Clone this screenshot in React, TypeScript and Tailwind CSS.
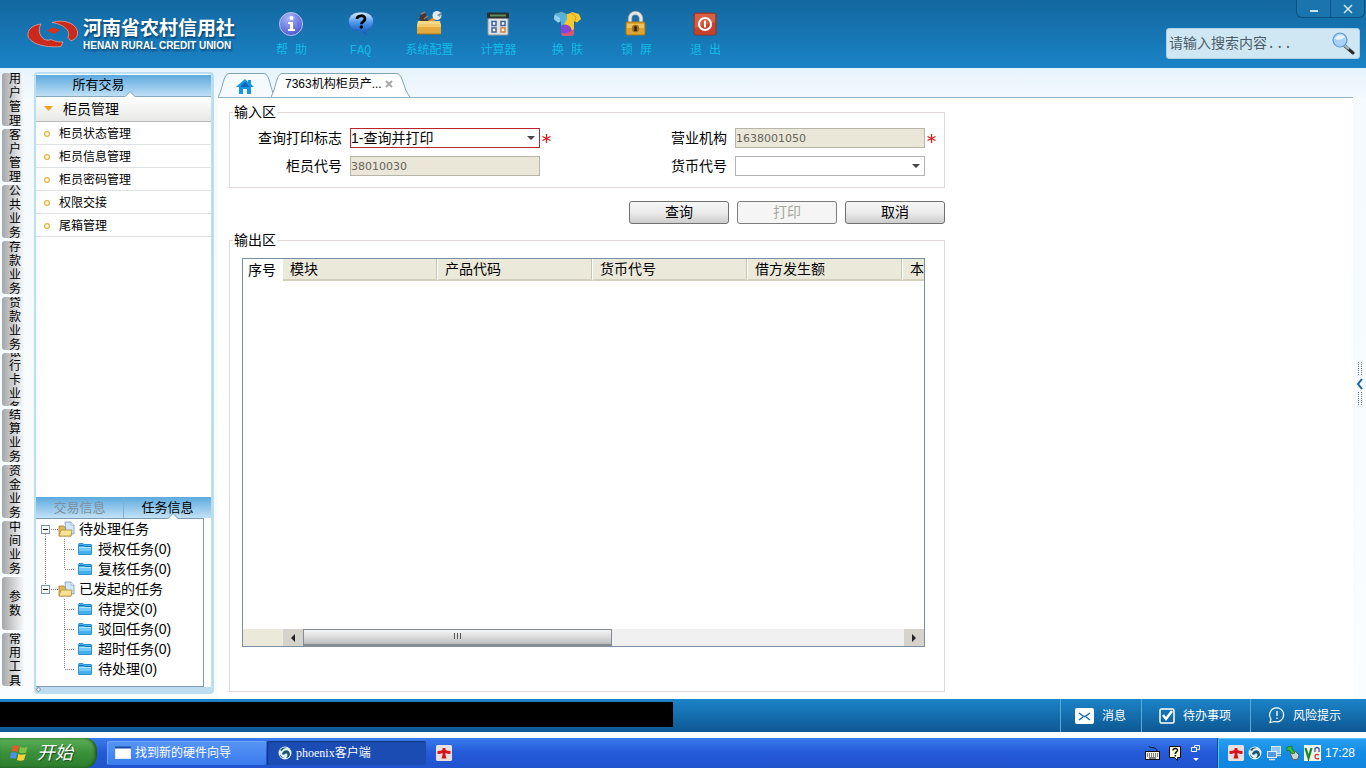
import React from "react";

const businessTabs = [
  "用户管理",
  "客户管理",
  "公共业务",
  "存款业务",
  "贷款业务",
  "银行卡业务",
  "结算业务",
  "资金业务",
  "中间业务",
  "参数",
  "常用工具",
];

const menuItems = ["柜员状态管理", "柜员信息管理", "柜员密码管理", "权限交接", "尾箱管理"];

const taskGroups = [
  { name: "待处理任务", items: ["授权任务(0)", "复核任务(0)"] },
  { name: "已发起的任务", items: ["待提交(0)", "驳回任务(0)", "超时任务(0)", "待处理(0)"] },
];

const columns = ["模块", "产品代码", "货币代号", "借方发生额", "本"];

function LogoMark() {
  return (
    <svg width="52" height="32" viewBox="0 0 52 32" aria-hidden="true">
      <path d="M14 5C5 6 0 11 1 17c2 7 15 12 33 10.500l2-4.500c-6 0-9-1-12-2.500-2 1-6 1-8-1-4-4-5-9-2-14.500z" fill="#cb2a1a" stroke="#e9b3ac" strokeWidth=".7" />
      <path d="M25 3.500c12-4 24 1 25.500 9 .5 5-2 7.500-6.500 9.500l-3-3.500c3-7-4-13-16-15z" fill="#cb2a1a" stroke="#e9b3ac" strokeWidth=".7" />
      <path d="M20 11.500l6-3 7 2.500-6 4z" fill="#dd2f1c" />
    </svg>
  );
}

function HelpIcon() {
  return (
    <svg width="28" height="28" viewBox="0 0 28 28" aria-hidden="true">
      <defs>
        <radialGradient id="help" cx=".4" cy=".25" r=".8">
          <stop offset="0" stopColor="#aab6fa" />
          <stop offset="1" stopColor="#4a55cf" />
        </radialGradient>
      </defs>
      <circle cx="13" cy="14" r="11.5" fill="url(#help)" stroke="#b9c4f2" />
      <circle cx="13.500" cy="8" r="2" fill="#fff" />
      <path d="M10 12h5v7h2v2h-7v-2h2v-5h-2z" fill="#fff" />
    </svg>
  );
}

function FaqIcon() {
  return (
    <svg width="28" height="28" viewBox="0 0 28 28" aria-hidden="true">
      <defs>
        <linearGradient id="faq" x1="0" y1="0" x2="0" y2="1">
          <stop offset="0" stopColor="#dff1ff" />
          <stop offset=".45" stopColor="#4795ea" />
          <stop offset="1" stopColor="#0c49b0" />
        </linearGradient>
      </defs>
      <path d="M14 2c8 0 12.500 4 12.500 9S23 20 18 21l2 5-6-5C6 21 1.500 17 1.500 11.500S6 2 14 2z" fill="url(#faq)" stroke="#2263b8" strokeWidth=".7" />
      <path d="M10 9c0-4 8-4.500 8-.3 0 3-3.500 2.800-3.500 5.500" fill="none" stroke="#05070c" strokeWidth="2.800" />
      <circle cx="14.300" cy="17" r="1.700" fill="#05070c" />
    </svg>
  );
}

function ConfigIcon() {
  return (
    <svg width="28" height="28" viewBox="0 0 28 28" aria-hidden="true">
      <path d="M3 9l3-7 4 2 2 7-5 1z" fill="#49372f" />
      <path d="M5 4l4-2M8 9l4-3" stroke="#9a7d70" strokeWidth="1.500" />
      <path d="M12 11l7-5 2 2-5 5z" fill="#e88a25" />
      <circle cx="21" cy="5.500" r="4.500" fill="#e3eaf0" />
      <path d="M21 5l5-3-2 5z" fill="#84919c" />
      <path d="M2 11h22l1 4H1z" fill="#f8da86" />
      <path d="M1 14h24v10H1z" fill="#e6ab3f" />
      <path d="M1 14h24v3H1z" fill="#f4cc6d" />
      <path d="M1 24h24" stroke="#a96f1d" />
    </svg>
  );
}

function CalculatorIcon() {
  return (
    <svg width="28" height="28" viewBox="0 0 28 28" aria-hidden="true">
      <rect x="3" y="7" width="20" height="18" rx="1" fill="#dfe3e4" stroke="#8f9a9f" />
      <rect x="2" y="2.500" width="22" height="6" rx="1" fill="#26312f" />
      <path d="M5 5.500h16" stroke="#638c56" strokeWidth="2" />
      <g fill="#fff" stroke="#41619f" strokeWidth="1.500">
        <rect x="7" y="11.500" width="4" height="4" />
        <rect x="16" y="11.500" width="4" height="4" />
        <rect x="7" y="18" width="4" height="4" />
        <rect x="16" y="18" width="4" height="4" stroke="#dc8130" />
      </g>
    </svg>
  );
}

function SkinIcon() {
  return (
    <svg width="28" height="28" viewBox="0 0 28 28" aria-hidden="true">
      <defs>
        <clipPath id="shirt">
          <path d="M8 2q5 4 10 0l7 2 2 5-4 3.500-3-1.500v12l-1.500 2.500h-10L7 23V11l-3 1.500L0 9l1-5z" />
        </clipPath>
      </defs>
      <g clipPath="url(#shirt)">
        <path d="M0 0h28v28H0z" fill="#f6c92c" />
        <path d="M0 0h13v9l-5 9H0z" fill="#56b2da" />
        <path d="M0 4l6 4v6H0z" fill="#91d1ea" />
        <path d="M5 17c4-4 10-3 12 1l3 8H5z" fill="#8547cf" />
        <path d="M7 23c5 1 9 0 14-5v9H7z" fill="#e0526e" />
        <path d="M17 3l5 4-2 9" fill="none" stroke="#e69a1d" />
      </g>
    </svg>
  );
}

function LockIcon() {
  return (
    <svg width="28" height="28" viewBox="0 0 28 28" aria-hidden="true">
      <path d="M7 14V8.500a5.500 5.500 0 0 1 11 0V14" fill="none" stroke="#7e8b90" strokeWidth="4.500" />
      <path d="M7 14V8.500a5.500 5.500 0 0 1 11 0V14" fill="none" stroke="#e3e7e8" strokeWidth="3" />
      <rect x="3" y="12" width="19" height="13" rx="1.500" fill="#dda530" stroke="#a3761d" />
      <path d="M4 14h17v4H4z" fill="#f2cf70" opacity=".7" />
      <circle cx="12.500" cy="18.500" r="3.700" fill="#9a6c1c" />
      <path d="M12.500 16a1.500 1.500 0 0 1 1 2.500l.5 2.500h-3l.5-2.500a1.500 1.500 0 0 1 1-2.500z" fill="#2e2110" />
    </svg>
  );
}

function ExitIcon() {
  return (
    <svg width="28" height="28" viewBox="0 0 28 28" aria-hidden="true">
      <rect x="2" y="3" width="22" height="22" rx="2" fill="#c4432b" stroke="#943425" />
      <path d="M3 4h20v8L3 18z" fill="#d9694f" opacity=".75" />
      <circle cx="13" cy="14" r="6" fill="none" stroke="#fff" strokeWidth="2" />
      <path d="M13 10.500v7" stroke="#fff" strokeWidth="2" />
    </svg>
  );
}

const tools = [
  { label: "帮 助", icon: <HelpIcon /> },
  { label: "FAQ", icon: <FaqIcon /> },
  { label: "系统配置", icon: <ConfigIcon /> },
  { label: "计算器", icon: <CalculatorIcon /> },
  { label: "换 肤", icon: <SkinIcon /> },
  { label: "锁 屏", icon: <LockIcon /> },
  { label: "退 出", icon: <ExitIcon /> },
];

function Header() {
  return (
    <header className="flex h-[68px] shrink-0 items-start bg-linear-to-b from-[#1368a0] to-[#1a83c6]">
      <div className="flex w-[257px] shrink-0 items-center gap-1 pt-[18px] pl-[27px]">
        <LogoMark />
        <div className="whitespace-nowrap text-white [text-shadow:1px_2px_2px_#0b4370]">
          <div className="text-[19px] leading-[22px] font-bold">河南省农村信用社</div>
          <div className="text-[10px] leading-3 font-bold">HENAN RURAL CREDIT UNION</div>
        </div>
      </div>
      <nav className="flex flex-1 pt-[10px]">
        {tools.map((tool) => (
          <button
            key={tool.label}
            className="flex w-[69px] flex-col items-center gap-[5px] font-['Liberation_Mono','Noto_Sans_CJK_SC',monospace] text-xs whitespace-nowrap text-[#12bbe6]"
          >
            {tool.icon}
            {tool.label}
          </button>
        ))}
      </nav>
      <div className="flex shrink-0 flex-col items-end">
        <div className="mr-px flex h-[18px] w-[69px] rounded-b-md border border-t-0 border-[#0d517f] bg-[#1a74ae]">
          <button aria-label="最小化" className="flex flex-1 items-center justify-center border-r border-[#0f578a]">
            <svg width="10" height="10"><path d="M1 7h8" stroke="#c9e3f1" strokeWidth="2" /></svg>
          </button>
          <button aria-label="关闭" className="flex flex-1 items-center justify-center">
            <svg width="10" height="10"><path d="M1 1l8 8M9 1L1 9" stroke="#d8ebf5" strokeWidth="1.500" /></svg>
          </button>
        </div>
        <div className="mt-[10px] mr-[6px] flex h-[31px] w-[194px] items-center rounded-[3px] border border-[#a9d0e3] bg-[#cee7f3] pr-1 pl-[2px]">
          <input
            aria-label="搜索"
            placeholder="请输入搜索内容..."
            className="min-w-0 flex-1 bg-transparent font-['Liberation_Mono','Noto_Sans_CJK_SC',monospace] text-sm text-[#4c5c66] outline-none placeholder:text-[#4c5c66]"
          />
          <button aria-label="搜索">
            <svg width="24" height="24" viewBox="0 0 24 24">
              <path d="M14 14l8 7" stroke="#2c2b2b" strokeWidth="3" strokeLinecap="round" />
              <path d="M13 13l5 4" stroke="#a6b5bf" strokeWidth="2.500" />
              <circle cx="9" cy="8" r="7" fill="#a9d0f7" stroke="#5e9ad8" strokeWidth="1.200" />
              <path d="M4 7c1-4 7-6 10-2-2 2-6 4-10 2z" fill="#e3f2ff" />
            </svg>
          </button>
        </div>
      </div>
    </header>
  );
}

function Notch() {
  return (
    <svg width="10" height="6" className="absolute -bottom-px left-1/2" aria-hidden="true">
      <path d="M0 6l5-5 5 5z" fill="#fff" />
      <path d="M0 5.500L5 .5l5 5" fill="none" stroke="#7fa8c2" />
    </svg>
  );
}

function FolderIcon() {
  return (
    <svg width="14" height="14" viewBox="0 0 14 14" className="shrink-0" aria-hidden="true">
      <path d="M.5 2.500V12q0 .5.500.5h12q.5 0 .5-.5V3q0-.5-.5-.5H6L5 1.500H1z" fill="#43b0ee" stroke="#2f93cf" />
      <path d="M1 3.500h5l1 1h6" fill="none" stroke="#1574b5" />
      <path d="M1 5.500h12" stroke="#b6e4fb" />
      <path d="M1 6h12v3H1z" fill="#74cbf8" />
    </svg>
  );
}

function OpenFolderIcon() {
  return (
    <svg width="17" height="17" viewBox="0 0 17 17" className="shrink-0" aria-hidden="true">
      <path d="M1 5h5l1 2h6v8H1z" fill="#e5b958" stroke="#a68138" strokeWidth=".8" />
      <path d="M7 1h6l3 3v9l-8-1z" fill="#d2e8fc" stroke="#7296bd" strokeWidth=".8" />
      <path d="M13 1v3h3" fill="#fff" stroke="#7296bd" strokeWidth=".6" />
      <path d="M1 15l2-6h11l-1 6z" fill="#fbe391" stroke="#b58b35" strokeWidth=".8" />
    </svg>
  );
}

function TaskTree() {
  return (
    <ul className="mr-[7px] h-[169px] shrink-0 border-t border-r border-b border-[#7d9cb4] bg-white text-sm leading-5">
      {taskGroups.map((group, g) => {
        const lastGroup = g === taskGroups.length - 1;
        return (
          <li key={group.name}>
            <div className="flex h-5 items-center pl-[5px]">
              <svg width="17" height="20" className="shrink-0" aria-hidden="true">
                {g > 0 && <path d="M4.500 0v6" stroke="#8a7d7d" strokeDasharray="1 1" />}
                {!lastGroup && <path d="M4.500 15v5" stroke="#8a7d7d" strokeDasharray="1 1" />}
                <path d="M10 10.500h7" stroke="#8a7d7d" strokeDasharray="1 1" />
                <rect x=".5" y="6.500" width="8" height="8" fill="#f6f6f2" stroke="#7f93a8" />
                <path d="M2 10.500h5" stroke="#000" />
              </svg>
              <OpenFolderIcon />
              <span className="pl-1 whitespace-nowrap">{group.name}</span>
            </div>
            <ul>
              {group.items.map((item, i) => (
                <li key={item} className="flex h-5 items-center pl-[5px]">
                  <svg width="37" height="20" className="shrink-0" aria-hidden="true">
                    {!lastGroup && <path d="M4.500 0v20" stroke="#8a7d7d" strokeDasharray="1 1" />}
                    <path
                      d={i === group.items.length - 1 ? "M23.500 0v10" : "M23.500 0v20"}
                      stroke="#8a7d7d"
                      strokeDasharray="1 1"
                    />
                    <path d="M24 10.500h10" stroke="#8a7d7d" strokeDasharray="1 1" />
                  </svg>
                  <FolderIcon />
                  <span className="pl-[6px] whitespace-nowrap">{item}</span>
                </li>
              ))}
            </ul>
          </li>
        );
      })}
    </ul>
  );
}

function Sidebar() {
  return (
    <>
      <nav className="flex w-[34px] shrink-0 flex-col gap-[3px] pt-[5px] pl-[2px]">
        {businessTabs.map((tab) => (
          <button
            key={tab}
            className="flex h-[53px] w-[22px] items-center justify-center overflow-hidden rounded-l-[3px] bg-linear-to-r from-[#a4a6a8] via-[#cfd0d2] to-[#f8f9fa] pl-1 text-xs leading-[14px]"
          >
            <span className="w-3 shrink-0 break-all">{tab}</span>
          </button>
        ))}
      </nav>
      <aside className="mt-1 mb-[5px] flex w-[180px] shrink-0 flex-col rounded-sm border-2 border-r-3 border-[#b9dff0] bg-white">
        <div className="mt-px flex h-[22px] shrink-0 border-b border-[#86a9bf] bg-linear-to-b from-[#5aaade] to-[#bfdff5] pr-[50px]">
          <h2 className="relative flex-1 text-center text-[13px] leading-5">
            所有交易
            <span className="absolute bottom-0 left-1/2 ml-4 h-[6px] w-5"><Notch /></span>
          </h2>
        </div>
        <button className="flex h-[25px] shrink-0 items-center gap-[10px] border-b border-[#b9b9b9] bg-linear-to-b from-white to-[#e8e8e6] pl-2 text-sm">
          <svg width="9" height="6" aria-hidden="true"><path d="M0 0h9L4.500 5z" fill="#f0a51c" /></svg>
          柜员管理
        </button>
        <ul className="flex-1 text-xs">
          {menuItems.map((item) => (
            <li key={item} className="border-b border-[#dfe2e4]">
              <a href="#" className="flex h-[22px] items-center gap-[9px] pt-[2px] pl-2">
                <svg width="6" height="6" aria-hidden="true"><circle cx="3" cy="3" r="2.400" fill="#fffbe9" stroke="#e6b33d" strokeWidth="1.200" /></svg>
                {item}
              </a>
            </li>
          ))}
        </ul>
        <div className="flex h-[21px] shrink-0 bg-linear-to-b from-[#5aaade] to-[#c2e1f6] text-[13px] leading-5">
          <button className="flex-1 border-r border-[#7fb3d4] text-[#7c8f9c]">交易信息</button>
          <button className="relative flex-1">
            任务信息
            <span className="absolute bottom-0 left-1/2 -ml-[10px] h-[6px] w-5"><Notch /></span>
          </button>
        </div>
        <TaskTree />
        <div className="flex h-[5px] shrink-0 items-center bg-[#bddcf0]">
          <svg width="6" height="5" aria-hidden="true"><circle cx="2.500" cy="2.500" r="1.800" fill="#fff" stroke="#6d8799" /></svg>
        </div>
      </aside>
    </>
  );
}

function PageTabs() {
  return (
    <div className="flex h-[29px] shrink-0 items-end">
      <button aria-label="主页" className="relative flex h-6 w-[58px] items-center justify-center">
        <svg width="58" height="24" viewBox="0 0 58 24" className="absolute inset-0" aria-hidden="true">
          <path d="M0 24C5 16 5 1 11 .5h35C52 1 52 16 57 24" fill="#f4fafe" stroke="#7ca5b8" />
        </svg>
        <svg width="18" height="16" viewBox="0 0 18 16" className="relative mr-1 mt-1" aria-hidden="true">
          <path d="M9 0L0 8h3v7h4v-5h4v5h4V8h3l-3-2.700V1h-3v2z" fill="#1593e6" />
          <path d="M9 3L5 7v1h8V7z" fill="#1067b4" />
        </svg>
      </button>
      <div className="relative -ml-[5px] flex h-6 w-[140px] items-center">
        <svg width="140" height="24" viewBox="0 0 140 24" className="absolute inset-0" aria-hidden="true">
          <path d="M0 24C5 16 5 1 11 .5h115c6 .5 6 15.500 13 23.500" fill="#fff" stroke="#7ca5b8" />
        </svg>
        <button className="relative ml-[14px] pb-[3px] text-xs whitespace-nowrap">7363机构柜员产...</button>
        <button aria-label="关闭标签" className="relative ml-[3px] pb-[2px]">
          <svg width="8" height="8"><path d="M1 1l6 6M7 1L1 7" stroke="#a9a9a9" strokeWidth="2" /></svg>
        </button>
      </div>
    </div>
  );
}

function Star() {
  return (
    <svg width="9" height="9" aria-hidden="true">
      <path d="M4.500 0v9M.5 2.500l8 4M8.500 2.500l-8 4" stroke="#d01f1f" strokeWidth="1.300" />
    </svg>
  );
}

function Arrow() {
  return (
    <svg width="8" height="4" className="pointer-events-none absolute top-2 right-[5px]" aria-hidden="true">
      <path d="M0 0h8L4 4z" fill="#444" />
    </svg>
  );
}

const formRow = "grid grid-cols-[120px_190px_11px_1fr_190px_19px] items-center";

function InputArea() {
  return (
    <fieldset className="min-w-0 border border-[#e2d8d8] pt-[7px] pb-[11px]">
      <legend className="ml-[3px] px-px text-sm leading-[18px]">输入区</legend>
      <div className="flex flex-col gap-2 text-sm leading-5">
        <div className={formRow}>
          <label htmlFor="printFlag" className="pr-2 text-right">查询打印标志</label>
          <div className="relative">
            <select id="printFlag" className="block h-5 w-full appearance-none border border-[#b9262b] bg-white leading-[18px]">
              <option>1-查询并打印</option>
            </select>
            <Arrow />
          </div>
          <div className="pl-[2px]"><Star /></div>
          <label htmlFor="branch" className="pr-2 text-right">营业机构</label>
          <input id="branch" readOnly defaultValue="1638001050" className="h-5 w-full border border-[#b5b5a8] bg-[#ebe7d8] pt-px font-['DejaVu_Sans',sans-serif] text-[11px] text-[#66645c]" />
          <div className="pl-[2px]"><Star /></div>
        </div>
        <div className={formRow}>
          <label htmlFor="teller" className="pr-2 text-right">柜员代号</label>
          <input id="teller" readOnly defaultValue="38010030" className="h-5 w-full border border-[#b5b5a8] bg-[#ebe7d8] pt-px font-['DejaVu_Sans',sans-serif] text-[11px] text-[#66645c]" />
          <span />
          <label htmlFor="currency" className="pr-2 text-right">货币代号</label>
          <div className="relative">
            <select id="currency" className="block h-5 w-full appearance-none border border-[#b4b4b4] bg-white">
              <option></option>
            </select>
            <Arrow />
          </div>
        </div>
      </div>
    </fieldset>
  );
}

function OutputArea() {
  return (
    <fieldset className="mt-[7px] flex min-h-0 min-w-0 flex-1 flex-col border border-[#e2d8d8] px-3 pt-[9px] pb-11">
      <legend className="-ml-[9px] px-px text-sm leading-[18px]">输出区</legend>
      <div className="mr-[7px] flex min-h-0 min-w-0 flex-1 flex-col border border-[#7b8fa3] bg-white">
        <div className="flex-1 overflow-hidden">
          <table className="w-[815px] table-fixed border-separate border-spacing-0 text-sm leading-5">
            <thead>
              <tr>
                <th className="w-10 pl-[5px] text-left font-normal">序号</th>
                {columns.map((column) => (
                  <th
                    key={column}
                    className="w-[155px] border-r border-b-2 border-r-white border-b-[#d3cfbd] bg-[#ebe9da] pl-[7px] text-left font-normal shadow-[inset_-1px_0_0_#c8c4b2]"
                  >
                    {column}
                  </th>
                ))}
              </tr>
            </thead>
            <tbody />
          </table>
        </div>
        <div className="flex h-[17px] shrink-0 bg-[#f0f0f0]">
          <div className="w-10 bg-[#ebe9d9]" />
          <button aria-label="向左滚动" className="flex w-5 items-center justify-center bg-[#d6d3ca]">
            <svg width="4" height="8"><path d="M4 0v8L0 4z" fill="#222" /></svg>
          </button>
          <div className="flex flex-1">
            <div className="flex w-[309px] justify-center gap-[2px] border border-b-2 border-[#858b93] bg-linear-to-b from-[#f4f4f4] via-[#dcdcdc] to-[#bdbdbd] pt-[3px]">
              <span className="h-[6px] w-px bg-[#555]" />
              <span className="h-[6px] w-px bg-[#555]" />
              <span className="h-[6px] w-px bg-[#555]" />
            </div>
          </div>
          <button aria-label="向右滚动" className="flex w-5 items-center justify-center bg-[#d6d3ca]">
            <svg width="4" height="8"><path d="M0 0v8l4-4z" fill="#222" /></svg>
          </button>
        </div>
      </div>
    </fieldset>
  );
}

const actionButton =
  "h-[23px] w-[100px] rounded-[3px] border border-[#707070] bg-linear-to-b from-[#f6f6f6] via-[#ebebeb] to-[#cdcdcd] pb-[2px] text-sm leading-5 disabled:border-[#7d7d7d] disabled:from-[#f5f5f5] disabled:via-[#f5f5f5] disabled:to-[#f5f5f5] disabled:text-[#a7a79b]";

function Workspace() {
  return (
    <main className="flex min-w-0 flex-1 flex-col pl-1">
      <PageTabs />
      <div className="flex flex-1 flex-col border-t border-[#8db4c6] bg-white pt-[5px] pb-[7px] pl-[11px]">
        <div className="flex w-[716px] flex-1 flex-col">
          <InputArea />
          <div className="mt-[13px] flex justify-end gap-2">
            <button className={actionButton}>查询</button>
            <button className={actionButton} disabled>打印</button>
            <button className={actionButton}>取消</button>
          </div>
          <OutputArea />
        </div>
      </div>
    </main>
  );
}

const statusItem = "flex items-center gap-2 border-l border-[#5aa9da] text-xs whitespace-nowrap text-white";

function StatusBar() {
  return (
    <footer className="flex h-[33px] shrink-0 justify-between bg-linear-to-b from-[#1b84c8] to-[#0e5893]">
      <div className="mt-[3px] h-[25px] w-[673px] bg-black" />
      <div className="flex">
        <button className={`${statusItem} w-[81px] pl-[14px]`}>
          <svg width="19" height="16" aria-hidden="true">
            <rect width="19" height="16" rx="2" fill="#fff" />
            <path d="M4 5l5 3.500h1L15 5M4 12l4-3M15 12l-4-3" fill="none" stroke="#1671b0" strokeWidth="1.500" />
          </svg>
          消息
        </button>
        <button className={`${statusItem} w-[109px] pl-[17px]`}>
          <svg width="16" height="16" aria-hidden="true">
            <rect x="1" y="1" width="14" height="14" rx="1.500" fill="none" stroke="#fff" strokeWidth="1.500" />
            <path d="M4 7l3 4 6-8" fill="none" stroke="#fff" strokeWidth="2.500" />
          </svg>
          待办事项
        </button>
        <button className={`${statusItem} w-[116px] pl-[17px]`}>
          <svg width="17" height="17" aria-hidden="true">
            <path d="M2 15.500l1-3.500a7 7 0 1 1 3.500 2.500z" fill="none" stroke="#fff" strokeWidth="1.200" />
            <path d="M9 4v5M9 10.500v1.500" stroke="#fff" strokeWidth="1.300" />
          </svg>
          风险提示
        </button>
      </div>
    </footer>
  );
}

function RedCrossIcon() {
  return (
    <svg width="16" height="16" aria-hidden="true">
      <rect width="16" height="16" rx="1.500" fill="#e6e1df" />
      <path d="M1.500 6q3 0 5-1V3h3v2q2 1 5 1v3q-3 0-5-1v2l1 3.500h-5l1-3.500V8q-2 1-5 1z" fill="#d3151b" />
    </svg>
  );
}

function GlobeIcon() {
  return (
    <svg width="14" height="14" viewBox="0 0 14 14" aria-hidden="true">
      <circle cx="7" cy="7" r="6.500" fill="#e2f0f6" />
      <path d="M2 4c2-3 6-3 7-2-3 0-4 1-5 3zM6 5c3-2 6 0 6 4-1 2-2 3-4 3 2-2 2-4 0-5-1 2-3 2-4 1 0-1 1-2 2-3zM2 8c1 2 2 3 4 4-2 0-4-1-4-4z" fill="#1a5570" />
    </svg>
  );
}

const taskButton = "flex w-[159px] items-center gap-1 rounded-[2px] text-xs whitespace-nowrap text-white";

function Taskbar() {
  return (
    <div className="mt-[6px] flex h-[30px] shrink-0 bg-linear-to-b from-[#3a7bec] via-[#2459d8] to-[#2053cd]">
      <button className="flex w-[97px] items-center gap-2 rounded-r-xl bg-linear-to-b from-[#5caf58] via-[#3a913a] to-[#2c7c2d] pl-[10px] text-lg leading-5 text-white italic shadow-[inset_-2px_0_3px_#1d5a20] [text-shadow:1px_1px_1px_#1c4d1d]">
        <svg width="19" height="18" viewBox="0 0 19 18" aria-hidden="true">
          <path d="M3 2c2-1 4-1 6 .5L7.500 8C6 7 4 6.500 1.500 7.500z" fill="#e9562a" />
          <path d="M10 3c2 1 5 1 7.500 0L16 8.500c-2 1-5 1-7 0z" fill="#7fc341" />
          <path d="M1 9c2-1 4-1 6 .5L5.500 15C4 14 2 13.500 0 14.500z" fill="#4e8ff0" />
          <path d="M8.300 10c2 1 5 1 7.500 0L14 16c-2 1-5 1-7 0z" fill="#fbd13b" />
        </svg>
        开始
      </button>
      <div className="ml-[10px] flex gap-px pt-[3px] pb-[3px]">
        <button className={`${taskButton} bg-linear-to-b from-[#5795f5] to-[#3a7bed] pl-2 shadow-[inset_1px_1px_0_#6fa6f8]`}>
          <svg width="16" height="14" aria-hidden="true">
            <rect x=".5" y="1.500" width="15" height="11" fill="#fff" stroke="#dbe8fa" />
            <path d="M0 1.500h16" stroke="#1b4aa5" strokeWidth="2" />
          </svg>
          找到新的硬件向导
        </button>
        <button className={`${taskButton} bg-[#1b4cb4] pl-[11px] font-['Liberation_Serif','Noto_Sans_CJK_SC',serif] shadow-[inset_1px_1px_1px_#123577]`}>
          <GlobeIcon />
          phoenix客户端
        </button>
      </div>
      <button aria-label="医疗助手" className="ml-[10px]"><RedCrossIcon /></button>
      <div className="ml-auto flex items-center gap-2 pr-[17px]">
        <svg width="16" height="14" aria-hidden="true">
          <path d="M4 0c0 3 8 0 8 5" fill="none" stroke="#111" />
          <rect x=".5" y="5.500" width="14" height="8" fill="#f1efe2" stroke="#111" />
          <path d="M2 8h11M2 10h11" stroke="#111" strokeDasharray="1 1" />
          <path d="M4 12h7" stroke="#111" />
        </svg>
        <svg width="14" height="16" aria-hidden="true">
          <path d="M.5 1.500h11v11h-3v3l-3-3h-5z" fill="#fffbd7" stroke="#111" />
          <path d="M4 5.500c0-3 5-2.500 4.500 0C8 7 6.300 7 6.300 9M6.300 10v1.500" fill="none" stroke="#111" strokeWidth="1.500" />
        </svg>
        <svg width="9" height="18" aria-hidden="true">
          <path d="M3.500 3V1.500h5v4H6.500M.5 3.500h5v4h-5z" fill="none" stroke="#fff" />
          <path d="M2 14h6l-3 3z" fill="#fff" />
        </svg>
      </div>
      <div className="flex w-[149px] items-center gap-1 border-l border-[#0b4a9e] bg-linear-to-b from-[#28a1f2] via-[#128be4] to-[#1285dd] pl-[10px] text-xs whitespace-nowrap text-white shadow-[inset_1px_1px_0_#5cc0fa]">
        <RedCrossIcon />
        <GlobeIcon />
        <svg width="16" height="16" aria-hidden="true">
          <rect x="5.500" y="1.500" width="9" height="7" fill="#92c7f7" stroke="#d9e8f5" />
          <rect x="1.500" y="6.500" width="9" height="6" fill="#5698df" stroke="#e4edf5" />
          <path d="M3 14.500h6M11 10.500h4" stroke="#d5dde4" strokeWidth="1.500" />
        </svg>
        <svg width="14" height="16" aria-hidden="true">
          <path d="M4 8l5-2 4 4-1 4-5 1z" fill="#c8d2cf" stroke="#55625d" />
          <path d="M1 2l5-1v3l3 4-3 1-3-4-2 1z" fill="#3dbb35" stroke="#156a1a" strokeWidth=".7" />
        </svg>
        <svg width="17" height="16" aria-hidden="true">
          <rect width="17" height="16" fill="#f5f5f0" />
          <path d="M1.500 3l3 10 3-10" fill="none" stroke="#168b2b" strokeWidth="2.300" />
          <path d="M11 7V3.500q2-2 4 0V7" fill="none" stroke="#3c52a8" strokeWidth="1.300" />
          <path d="M15 10q-4-1.500-4 1.500t4 2" fill="none" stroke="#cf3030" strokeWidth="1.300" />
        </svg>
        <time>17:28</time>
      </div>
    </div>
  );
}

export default function App() {
  return (
    <div className="flex min-h-screen flex-col bg-white font-['Liberation_Sans','Noto_Sans_CJK_SC',sans-serif] text-black">
      <Header />
      <div className="flex flex-1 bg-linear-to-b from-[#e6f3fb] via-[#f4fafe] via-5% to-[#fafdff]">
        <Sidebar />
        <Workspace />
        <button aria-label="展开侧栏" className="flex w-[13px] shrink-0 flex-col items-center justify-center">
          <svg width="8" height="44" aria-hidden="true">
            <path d="M2.500 0v14M5.500 0v14M2.500 30v14M5.500 30v14" stroke="#60788a" strokeDasharray="1 1" />
            <path d="M6 17l-4 5 4 5" fill="none" stroke="#1261ad" strokeWidth="2" />
          </svg>
        </button>
      </div>
      <StatusBar />
      <Taskbar />
    </div>
  );
}
